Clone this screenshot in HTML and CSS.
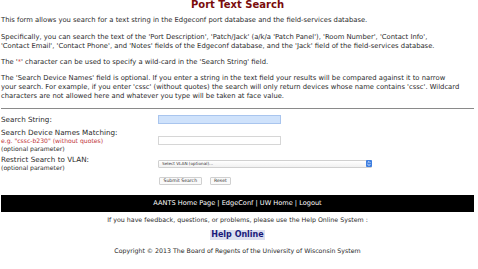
FILE: index.html
```html
<!DOCTYPE html>
<html>
<head>
<meta charset="utf-8">
<link rel="stylesheet" href="styles.css">
</head>
<body>
<h1 class="title">Port Text Search</h1>
<p class="txt first">This form allows you search for a text string in the Edgeconf port database and the field-services database.</p>
<p class="txt">Specifically, you can search the text of the 'Port Description', 'Patch/Jack' (a/k/a 'Patch Panel'), 'Room Number', 'Contact Info',<br>'Contact Email', 'Contact Phone', and 'Notes' fields of the Edgeconf database, and the 'Jack' field of the field-services database.</p>
<p class="txt">The '<span class="red">*</span>' character can be used to specify a wild-card in the 'Search String' field.</p>
<p class="txt">The 'Search Device Names' field is optional. If you enter a string in the text field your results will be compared against it to narrow<br>your search. For example, if you enter 'cssc' (without quotes) the search will only return devices whose name contains 'cssc'. Wildcard<br>characters are not allowed here and whatever you type will be taken at face value.</p>
<hr class="rule">
<form class="form">
  <div class="row r1">
    <div class="label"><span class="lbl">Search String:</span></div>
    <div class="field"><div class="input focus"></div></div>
  </div>
  <div class="row r2">
    <div class="label"><span class="lbl">Search Device Names Matching:</span><span class="hint">e.g. "cssc-b230" (without quotes)</span><span class="opt">(optional parameter)</span></div>
    <div class="field"><div class="input"></div></div>
  </div>
  <div class="row r3">
    <div class="label"><span class="lbl">Restrict Search to VLAN:</span><span class="opt">(optional parameter)</span></div>
    <div class="field"><div class="select"><span class="seltext">Select VLAN (optional)...</span><span class="arrow"><svg width="6" height="7" viewBox="0 0 6 7"><path d="M1.6 2.9 L3 1.5 L4.4 2.9 M1.6 4.1 L3 5.5 L4.4 4.1" fill="none" stroke="#fff" stroke-width="0.8"/></svg></span></div></div>
  </div>
  <div class="row r4">
    <div class="label"></div>
    <div class="field buttons"><span class="btn">Submit Search</span><span class="btn">Reset</span></div>
  </div>
</form>
<div class="navbar">AANTS Home Page | EdgeConf | UW Home | Logout</div>
<p class="center feedback">If you have feedback, questions, or problems, please use the Help Online System :</p>
<p class="center helpwrap"><span class="help">Help Online</span></p>
<p class="center copy">Copyright © 2013 The Board of Regents of the University of Wisconsin System</p>
</body>
</html>
```

FILE: styles.css
```css
html, body {
  margin: 0;
  padding: 0;
  background: #fff;
}
body {
  padding: 0 4px 0 1px;
  font-family: "DejaVu Sans", Verdana, sans-serif;
  color: #2a2a2a;
  font-size: 6.8px;
  line-height: 8.8px;
}
.title {
  margin: 0;
  text-align: center;
  font-size: 10px;
  line-height: 10px;
  color: #7a0c0c;
  font-weight: bold;
}
.txt {
  margin: 7.6px 0 0 0;
  white-space: nowrap;
}
.txt.first {
  margin-top: 6.4px;
}
.red { color: #e0302a; }
.rule {
  border: 0;
  border-top: 1px solid #8a8a8a;
  margin: 7.5px 0 0 0;
}
.form {
  display: flex;
  flex-direction: column;
}
.row {
  display: flex;
  align-items: center;
}
.r1 { margin-top: 6px; }
.r2 { margin-top: 3.7px; }
.r3 { margin-top: 1.5px; }
.r4 { margin-top: 4.8px; }
.label {
  width: 157px;
  display: flex;
  flex-direction: column;
}
.lbl {
  font-size: 7.2px;
  line-height: 9px;
}
.hint {
  color: #c0343a;
  font-size: 6.1px;
  line-height: 8.4px;
}
.opt {
  font-size: 6.1px;
  line-height: 8.4px;
}
.field {
  flex: 1;
  display: flex;
}
.input {
  width: 121px;
  height: 7px;
  border: 1px solid #d6d6d6;
  background: #fff;
}
.input.focus {
  background: #cfe2fb;
  border-color: #a9c5ee;
}
.select {
  width: 212px;
  height: 6px;
  border: 1px solid #d0d0d0;
  border-radius: 1px;
  background: linear-gradient(#fff, #f1f1f1);
  display: flex;
  align-items: center;
  justify-content: space-between;
}
.seltext {
  font-size: 4.2px;
  line-height: 6px;
  padding-left: 3px;
  color: #333;
}
.arrow {
  width: 6px;
  height: 7px;
  background: #3f7fe0;
  border-radius: 1px;
  display: flex;
  margin-right: -1px;
}
.buttons {
  gap: 8px;
  padding-left: 1px;
}
.btn {
  font-size: 4.6px;
  line-height: 6px;
  padding: 0 3.5px;
  border: 1px solid #d0d0d0;
  border-radius: 1px;
  background: #fafafa;
  color: #333;
}
.navbar {
  margin-top: 9.8px;
  background: #000;
  color: #fff;
  text-align: center;
  height: 17px;
  line-height: 17px;
  font-size: 6.6px;
}
.center {
  text-align: center;
  margin: 0;
}
.feedback {
  margin-top: 3.7px;
  font-size: 6.3px;
  line-height: 8.6px;
}
.helpwrap {
  margin-top: 5.7px;
  line-height: 10px;
  display: flex;
  justify-content: center;
}
.help {
  font-size: 8px;
  line-height: 10px;
  font-weight: bold;
  color: #1a1a7a;
  background: #dcdff0;
  padding: 0 1px;
}
.copy {
  margin-top: 6.7px;
  font-size: 6.25px;
  line-height: 8.6px;
}
```
